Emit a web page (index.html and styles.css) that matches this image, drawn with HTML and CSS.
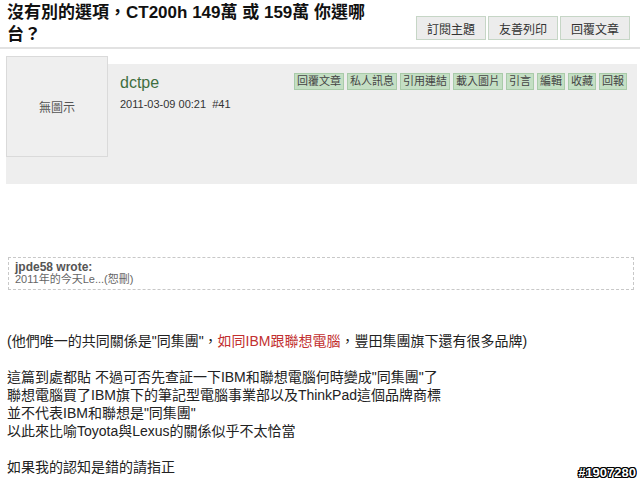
FILE: index.html
```html
<!DOCTYPE html>
<html lang="zh-TW">
<head>
  <meta charset="UTF-8" />
  <title>沒有別的選項，CT200h 149萬 或 159萬 你選哪台？</title>
  <link rel="stylesheet" href="styles.css">
</head>
<body>
  <div class="topic-head">
    <h1 class="topic-title">沒有別的選項，CT200h 149萬 或 159萬 你選哪台？</h1>
    <div class="topic-actions">
      <button class="gray-btn">訂閱主題</button>
      <button class="gray-btn">友善列印</button>
      <button class="gray-btn">回覆文章</button>
    </div>
  </div>

  <div class="post">
    <div class="avatar">無圖示</div>
    <div class="post-head">
      <div class="post-info">
        <div class="username">dctpe</div>
        <div class="post-date">2011-03-09 00:21 &nbsp;#41</div>
      </div>
      <div class="post-tools">
        <span class="tool">回覆文章</span>
        <span class="tool">私人訊息</span>
        <span class="tool">引用連結</span>
        <span class="tool">載入圖片</span>
        <span class="tool">引言</span>
        <span class="tool">編輯</span>
        <span class="tool">收藏</span>
        <span class="tool">回報</span>
      </div>
    </div>
  </div>

  <div class="quote">
    <div class="quote-author">jpde58 wrote:</div>
    <div class="quote-text">2011年的今天Le...(恕刪)</div>
  </div>

  <div class="post-content">
    <p>(他們唯一的共同關係是"同集團"，<span class="red">如同IBM跟聯想電腦</span>，豐田集團旗下還有很多品牌)</p>
    <p>這篇到處都貼 不過可否先查証一下IBM和聯想電腦何時變成"同集團"了<br>
    聯想電腦買了IBM旗下的筆記型電腦事業部以及ThinkPad這個品牌商標<br>
    並不代表IBM和聯想是"同集團"<br>
    以此來比喻Toyota與Lexus的關係似乎不太恰當</p>
    <p>如果我的認知是錯的請指正</p>
  </div>

  <div class="stamp">#1907280</div>
</body>
</html>
```

FILE: styles.css
```css
body {
  margin: 0;
  background: #fff;
  color: #222;
  font-family: "Liberation Sans", "Noto Sans CJK TC", sans-serif;
  position: relative;
  height: 484px;
  overflow: hidden;
}
.topic-head {
  display: flex;
  justify-content: space-between;
  align-items: flex-end;
  padding: 2px 10px 1px 7px;
  border-bottom: 2px solid #e2e2e2;
}
.topic-title {
  margin: 0;
  width: 380px;
  font-size: 17px;
  line-height: 22px;
  font-weight: bold;
  color: #111;
}
.topic-actions {
  display: flex;
  gap: 2px;
  margin-bottom: 6px;
}
.gray-btn {
  height: 24px;
  padding: 0 10px;
  border: 1px solid #c6d6c6;
  background: #ececec;
  color: #333;
  font-family: inherit;
  font-size: 12px;
}
.post {
  display: flex;
  margin: 15px 3px 0 6px;
  background: #eeeeee;
  height: 120px;
}
.avatar {
  width: 100px;
  height: 99px;
  margin-top: -8px;
  border: 1px solid #dadada;
  background: #efefef;
  display: flex;
  align-items: center;
  justify-content: center;
  font-size: 12px;
  color: #555;
}
.post-head {
  flex: 1;
  display: flex;
  justify-content: space-between;
  padding: 9px 10px 0 12px;
}
.username {
  font-size: 16px;
  color: #3f6e3f;
  line-height: 20px;
}
.post-date {
  margin-top: 5px;
  font-size: 11px;
  color: #333;
}
.post-tools {
  display: flex;
  gap: 3px;
  align-self: flex-start;
}
.tool {
  padding: 0 2px;
  height: 15px;
  line-height: 15px;
  background: #c4dfc4;
  border: 1px solid #a9cba9;
  font-size: 11px;
  color: #444;
}
.quote {
  margin: 73px 6px 0 8px;
  border: 1px dashed #c8c8c8;
  padding: 3px 6px 4px;
}
.quote-author {
  font-size: 12px;
  font-weight: bold;
  color: #555;
  line-height: 12px;
}
.quote-text {
  font-size: 11px;
  color: #666;
  line-height: 12px;
}
.post-content {
  margin: 42px 0 0 7px;
  font-size: 14px;
  line-height: 18px;
  color: #222;
}
.post-content p {
  margin: 0 0 18px;
}
.red {
  color: #c23030;
}
.stamp {
  position: absolute;
  right: 4px;
  bottom: 4px;
  font-size: 13px;
  font-weight: bold;
  color: #fff;
  text-shadow: 1px 0 0 #000, -1px 0 0 #000, 0 1px 0 #000, 0 -1px 0 #000,
    1px 1px 0 #000, -1px -1px 0 #000, 1px -1px 0 #000, -1px 1px 0 #000;
}
```
